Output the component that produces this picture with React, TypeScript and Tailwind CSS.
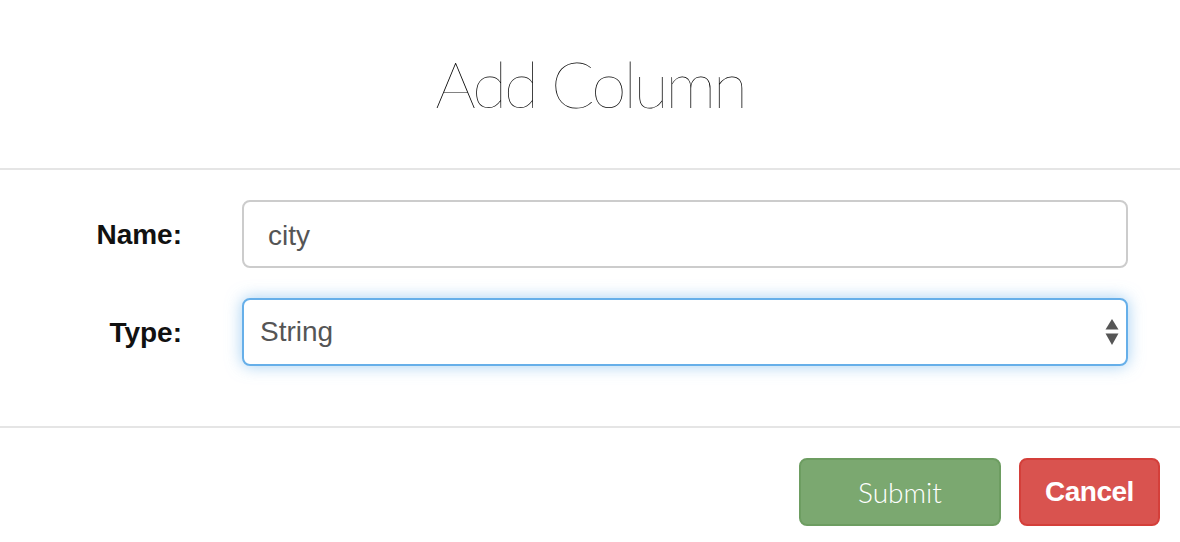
import { useState } from 'react'

const TYPES = ['String', 'Number', 'Boolean', 'Date']

export default function App() {
  const [name, setName] = useState('city')
  const [type, setType] = useState('String')

  return (
    <div className="h-[542px] w-[1180px] overflow-hidden bg-white font-['Liberation_Sans',Arial,sans-serif] text-[#111]">
      <div className="flex h-[170px] items-center justify-center border-b-2 border-[#e5e5e5]">
        <h1 className="font-['Lato',sans-serif] text-[64px] font-thin leading-none tracking-[-3px] text-black">
          Add Column
        </h1>
      </div>

      <form className="flex flex-col gap-[30px] border-b-2 border-[#e5e5e5] py-[30px] pl-[30px] pr-[52px] pb-[60px]">
        <div className="flex items-center">
          <label className="w-[152px] pt-[2px] text-right text-[28px] font-bold">Name:</label>
          <input
            value={name}
            onChange={(e) => setName(e.target.value)}
            className="ml-[60px] h-[68px] flex-1 rounded-[8px] border-2 border-[#ccc] px-[24px] pt-[4px] text-[28px] text-[#555] outline-none"
          />
        </div>
        <div className="flex items-center">
          <label className="w-[152px] pt-[2px] text-right text-[28px] font-bold">Type:</label>
          <div className="relative ml-[60px] flex-1">
            <select
              value={type}
              onChange={(e) => setType(e.target.value)}
              className="h-[68px] w-full appearance-none rounded-[8px] border-2 border-[#66afe9] bg-white px-[16px] text-[28px] text-[#555] shadow-[0_0_16px_rgba(102,175,233,0.6)] outline-none"
            >
              {TYPES.map((t) => (
                <option key={t}>{t}</option>
              ))}
            </select>
            <svg
              width="14"
              height="26"
              viewBox="0 0 14 26"
              className="pointer-events-none absolute right-[9px] top-1/2 -translate-y-1/2"
            >
              <path d="M7 0 L13.5 10.5 H0.5 Z" fill="#555" />
              <path d="M0.5 14.5 H13.5 L7 26 Z" fill="#555" />
            </svg>
          </div>
        </div>
      </form>

      <div className="flex justify-end gap-[18px] pr-[20px] pt-[30px]">
        <button className="h-[68px] w-[202px] rounded-[8px] border-2 border-[#6d9d61] bg-[#7ba870] font-['Lato',sans-serif] text-[28px] font-light text-white">
          Submit
        </button>
        <button className="h-[68px] w-[141px] rounded-[8px] border-2 border-[#d43f3a] bg-[#d9534f] text-[28px] font-bold tracking-[-0.5px] text-white">
          Cancel
        </button>
      </div>
    </div>
  )
}
